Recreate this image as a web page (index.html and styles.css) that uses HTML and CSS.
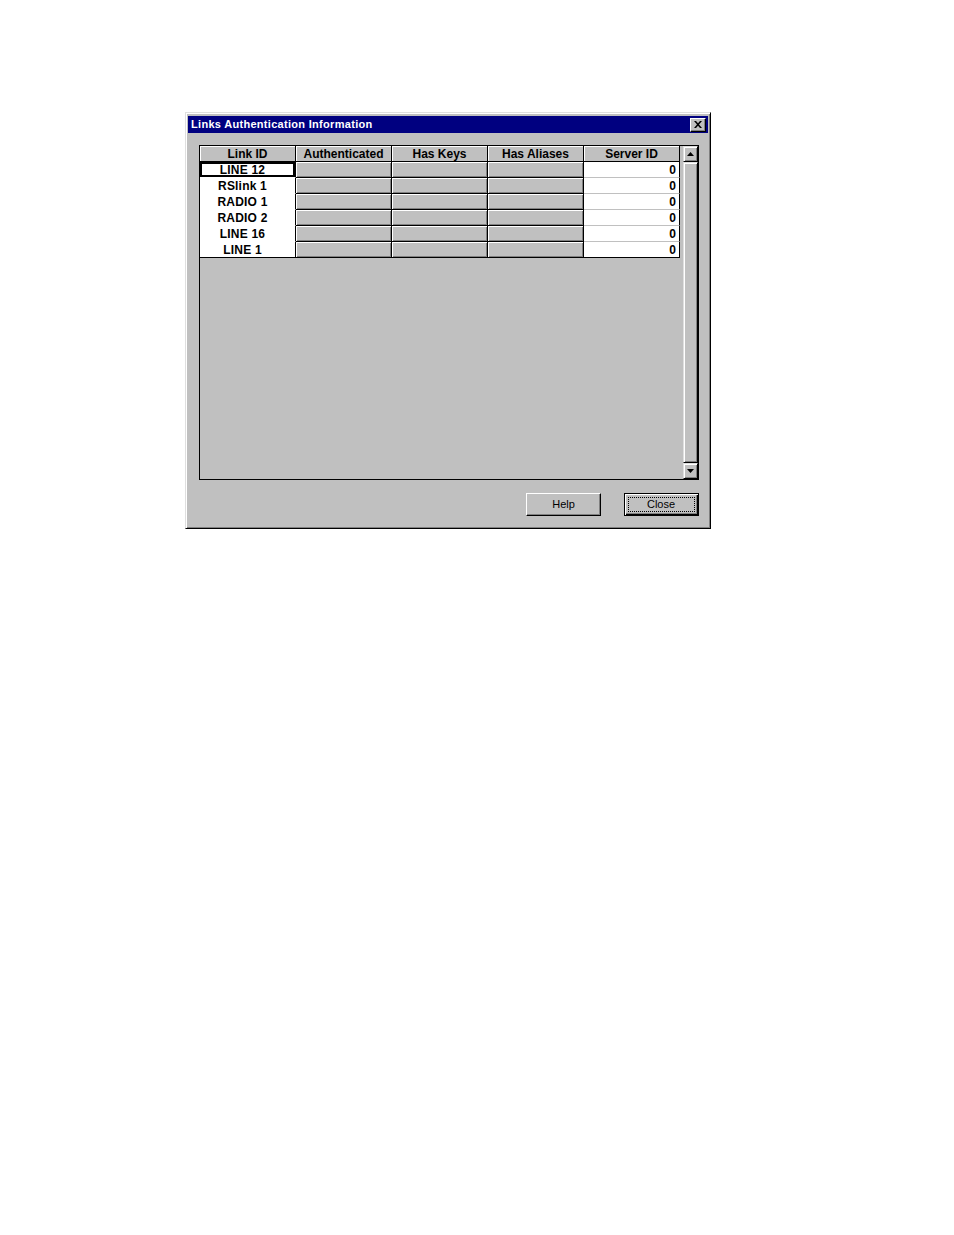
FILE: index.html
```html
<!DOCTYPE html>
<html>
<head>
<meta charset="utf-8">
<title>Links Authentication Information</title>
<link rel="stylesheet" href="styles.css">
</head>
<body>
<div class="page">
  <div class="dialog">
    <div class="titlebar">
      <span class="title">Links Authentication Information</span>
      <span class="xbtn"><svg width="8" height="7" viewBox="0 0 8 7"><path d="M0 0h2l2 2.2L6 0h2L5 3.5 8 7H6L4 4.8 2 7H0l3-3.5z" fill="#000"/></svg></span>
    </div>
    <div class="grid">
      <div class="table">
        <div class="row head">
          <div class="cell">Link ID</div>
          <div class="cell">Authenticated</div>
          <div class="cell">Has Keys</div>
          <div class="cell">Has Aliases</div>
          <div class="cell">Server ID</div>
        </div>
        <div class="row">
          <div class="cell w id focus-cell">LINE 12</div>
          <div class="cell g"></div><div class="cell g"></div><div class="cell g"></div>
          <div class="cell w num">0</div>
        </div>
        <div class="row">
          <div class="cell w id">RSlink 1</div>
          <div class="cell g"></div><div class="cell g"></div><div class="cell g"></div>
          <div class="cell w num">0</div>
        </div>
        <div class="row">
          <div class="cell w id">RADIO 1</div>
          <div class="cell g"></div><div class="cell g"></div><div class="cell g"></div>
          <div class="cell w num">0</div>
        </div>
        <div class="row">
          <div class="cell w id">RADIO 2</div>
          <div class="cell g"></div><div class="cell g"></div><div class="cell g"></div>
          <div class="cell w num">0</div>
        </div>
        <div class="row">
          <div class="cell w id">LINE 16</div>
          <div class="cell g"></div><div class="cell g"></div><div class="cell g"></div>
          <div class="cell w num">0</div>
        </div>
        <div class="row last">
          <div class="cell w id">LINE 1</div>
          <div class="cell g"></div><div class="cell g"></div><div class="cell g"></div>
          <div class="cell w num">0</div>
        </div>
      </div>
      <div class="scrollbar">
        <div class="sbtn"><svg width="7" height="4" viewBox="0 0 7 4"><path d="M3.5 0L7 4H0z" fill="#000"/></svg></div>
        <div class="track"></div>
        <div class="sbtn"><svg width="7" height="4" viewBox="0 0 7 4"><path d="M0 0h7L3.5 4z" fill="#000"/></svg></div>
      </div>
    </div>
    <div class="buttons">
      <div class="btn">Help</div>
      <div class="btn default"><span class="focus">Close</span></div>
    </div>
  </div>
</div>
</body>
</html>
```
FILE: styles.css
```css
body {
  margin: 0;
  background: #fff;
}
.page {
  padding: 112px 0 0 185px;
}
.dialog {
  width: 526px;
  box-sizing: border-box;
  background: #c0c0c0;
  border: 1px solid;
  border-color: #dfdfdf #000 #000 #dfdfdf;
  box-shadow: inset 1px 1px #fff, inset -1px -1px #808080;
  padding: 3px 2px 2px 2px;
}
.titlebar {
  height: 17px;
  background: #000080;
  display: flex;
  align-items: center;
  justify-content: space-between;
  padding: 0 2px 0 3px;
}
.title {
  color: #fff;
  font: bold 11px/17px "Liberation Sans", Arial, sans-serif;
  letter-spacing: 0.3px;
}
.xbtn {
  width: 16px;
  height: 14px;
  box-sizing: border-box;
  background: #c0c0c0;
  border: 1px solid;
  border-color: #fff #000 #000 #fff;
  box-shadow: inset -1px -1px #808080;
  display: flex;
  align-items: center;
  justify-content: center;
  padding-right: 1px;
}
.grid {
  margin: 12px 0 0 11px;
  width: 500px;
  height: 335px;
  box-sizing: border-box;
  border: 1px solid #000;
  display: flex;
  justify-content: space-between;
}
.table {
  width: 480px;
  align-self: flex-start;
}
.row {
  display: flex;
  height: 16px;
}
.cell {
  width: 96px;
  height: 16px;
  box-sizing: border-box;
  border-right: 1px solid #000;
  border-bottom: 1px solid #000;
  padding-top: 2px;
  font: bold 12px/13px "Liberation Sans", Arial, sans-serif;
  color: #000;
  text-align: center;
  white-space: nowrap;
}
.head .cell {
  background: #c0c0c0;
  box-shadow: inset 1px 1px #fff;
}
.w {
  background: #fff;
  border-bottom-color: #c0c0c0;
}
.w.id {
  border-bottom-color: #fff;
  padding-right: 10px;
  letter-spacing: 0.2px;
}
.g {
  background: #c0c0c0;
  box-shadow: inset 1px 1px #fff, inset -1px -1px #808080;
}
.num {
  text-align: right;
  padding-right: 3px;
}
.row.last .cell {
  border-bottom-color: #000;
}
.focus-cell {
  box-shadow: inset 0 0 0 2px #000;
}
.scrollbar {
  width: 15px;
  display: flex;
  flex-direction: column;
}
.sbtn, .track {
  box-sizing: border-box;
  background: #c0c0c0;
  border: 1px solid;
  border-color: #dfdfdf #000 #000 #dfdfdf;
  box-shadow: inset 1px 1px #fff, inset -1px -1px #808080;
}
.sbtn {
  height: 16px;
  display: flex;
  align-items: center;
  justify-content: center;
}
.track {
  flex: 1;
}
.buttons {
  display: flex;
  justify-content: flex-end;
  gap: 23px;
  margin: 13px 9px 0 0;
  padding-bottom: 10px;
}
.btn {
  width: 75px;
  height: 23px;
  box-sizing: border-box;
  border: 1px solid;
  border-color: #fff #000 #000 #fff;
  box-shadow: inset -1px -1px #808080;
  font: 11px/13px "Liberation Sans", Arial, sans-serif;
  color: #000;
  display: flex;
  align-items: center;
  justify-content: center;
}
.btn.default {
  border: 1px solid #000;
  box-shadow: inset 1px 1px #fff, inset -1px -1px #000, inset -2px -2px #808080;
}
.focus {
  width: 67px;
  height: 15px;
  box-sizing: border-box;
  border: 1px dotted #000;
  display: flex;
  align-items: center;
  justify-content: center;
  margin-right: 1px;
}
```
